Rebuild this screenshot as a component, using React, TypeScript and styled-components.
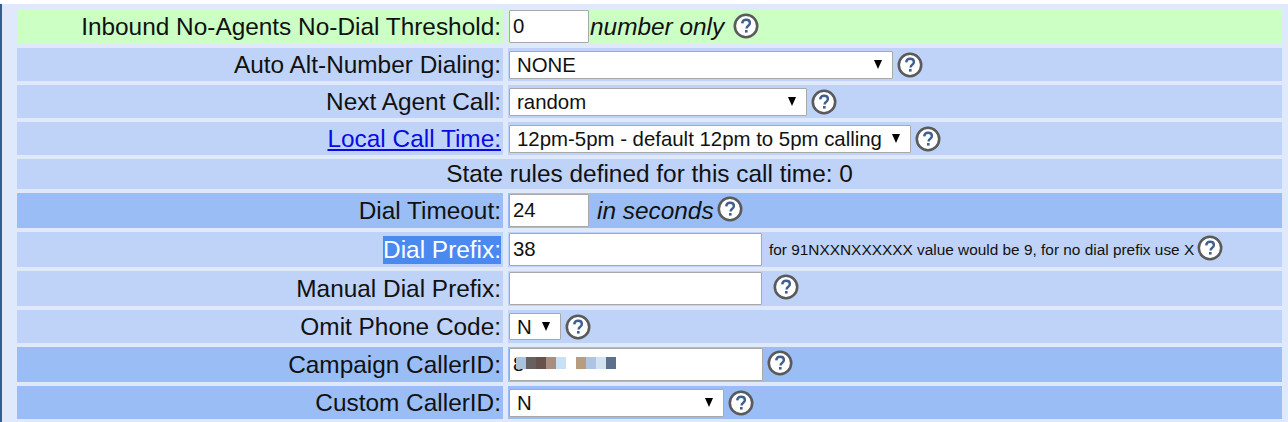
import * as React from 'react';
import styled, { createGlobalStyle } from 'styled-components';

const GlobalStyle = createGlobalStyle`
  html, body {
    margin: 0;
    padding: 0;
    background: #ffffff;
    font-family: "Liberation Sans", Arial, sans-serif;
    color: #111111;
  }
`;

type Tone = 'green' | 'light' | 'dark';

const toneColors: Record<Tone, string> = {
  green: '#ccffc4',
  light: '#bfd3f8',
  dark: '#9abdf5',
};

const Page = styled.div`
  width: 1288px;
  height: 422px;
  box-sizing: border-box;
  padding-top: 4px;
  overflow: hidden;
`;

const Panel = styled.div`
  height: 418px;
  box-sizing: border-box;
  border-left: 2px solid #2d5f95;
  background: #dfe9fb;
  padding: 5px 6px 0 15px;
  display: flex;
  flex-direction: column;
  gap: 4px;
`;

const Row = styled.div<{ $height: number }>`
  height: ${({ $height }) => $height}px;
  display: grid;
  grid-template-columns: 486px 1fr;
  column-gap: 5px;
`;

const LabelCell = styled.div<{ $tone: Tone }>`
  background: ${({ $tone }) => toneColors[$tone]};
  display: flex;
  align-items: center;
  justify-content: flex-end;
  padding-right: 2px;
  font-size: 24.4px;
`;

const FieldCell = styled.div<{ $tone: Tone }>`
  background: ${({ $tone }) => toneColors[$tone]};
  display: flex;
  align-items: center;
  padding-left: 1px;
`;

const WideCell = styled.div<{ $tone: Tone }>`
  grid-column: 1 / -1;
  background: ${({ $tone }) => toneColors[$tone]};
  display: flex;
  align-items: center;
  justify-content: center;
  font-size: 24.4px;
`;

const CallTimeLink = styled.a`
  color: #0a0ae6;
  text-decoration: underline;
`;

const SelectedLabel = styled.span`
  background: #4a8af0;
  color: #ffffff;
  line-height: 28px;
`;

const TextInput = styled.input<{ $width: number; $height: number }>`
  width: ${({ $width }) => $width}px;
  height: ${({ $height }) => $height}px;
  box-sizing: border-box;
  border: 1px solid #a9a9a9;
  border-radius: 1px;
  background: #ffffff;
  padding: 0 3px;
  margin: 0;
  font-family: inherit;
  font-size: 20.4px;
  color: #111111;
  outline: none;
`;

const SelectWrap = styled.div<{ $width: number; $height: number }>`
  position: relative;
  width: ${({ $width }) => $width}px;
  height: ${({ $height }) => $height}px;

  &::after {
    content: '';
    position: absolute;
    right: 11px;
    top: 50%;
    margin-top: -5px;
    border-left: 4.5px solid transparent;
    border-right: 4.5px solid transparent;
    border-top: 9px solid #000000;
  }
`;

const Select = styled.select`
  appearance: none;
  width: 100%;
  height: 100%;
  box-sizing: border-box;
  border: 1px solid #a9a9a9;
  border-radius: 1px;
  background: #ffffff;
  padding: 0 7px;
  margin: 0;
  font-family: inherit;
  font-size: 20.4px;
  color: #111111;
  outline: none;
`;

const Note = styled.span<{ $left: number }>`
  margin-left: ${({ $left }) => $left}px;
  font-size: 24.4px;
  font-style: italic;
`;

const SmallNote = styled.span`
  margin-left: 7px;
  font-size: 15.4px;
`;

const HelpIcon = styled.svg<{ $left: number; $up: number }>`
  width: 26px;
  height: 26px;
  flex: none;
  margin-left: ${({ $left }) => $left}px;
  margin-bottom: ${({ $up }) => $up}px;
`;

const MaskedField = styled.div`
  position: relative;
  display: flex;
`;

const Mosaic = styled.div`
  position: absolute;
  left: 7px;
  top: 9px;
  display: flex;
  height: 12px;
`;

const MosaicCell = styled.div<{ $color: string }>`
  width: 10px;
  background: ${({ $color }) => $color};
`;

const mosaicColors = [
  '#abc1dc', '#666060', '#65524c', '#a78e80', '#c8dff4', '#ffffff',
  '#b99b7f', '#aec4e2', '#d2e2ef', '#5c6f8c',
];

function Help({ left = 4, up = 0 }: { left?: number; up?: number }) {
  return (
    <HelpIcon $left={left} $up={up} viewBox="0 0 26 26" aria-hidden="true">
      <circle cx="13" cy="13" r="11.2" fill="#ffffff" stroke="#5a5a5a" strokeWidth="2.6" />
      <path
        d="M9.2 10.4c.2-2.4 1.8-3.6 3.9-3.6 2.2 0 3.8 1.2 3.8 3.1 0 1.5-.8 2.3-1.9 3.1-1 .7-1.4 1.2-1.4 2.4"
        fill="none"
        stroke="#3f5f8f"
        strokeWidth="2.4"
      />
      <rect x="12" y="17" width="2.6" height="2.6" fill="#3f5f8f" />
    </HelpIcon>
  );
}

function Dropdown({ width, height, value }: { width: number; height: number; value: string }) {
  return (
    <SelectWrap $width={width} $height={height}>
      <Select defaultValue={value}>
        <option>{value}</option>
      </Select>
    </SelectWrap>
  );
}

export default function App() {
  return (
    <Page>
      <GlobalStyle />
      <Panel>
        <Row $height={35}>
          <LabelCell $tone="green">Inbound No-Agents No-Dial Threshold:</LabelCell>
          <FieldCell $tone="green">
            <TextInput $width={80} $height={33} defaultValue="0" />
            <Note $left={1}>number only</Note>
            <Help left={9} up={2} />
          </FieldCell>
        </Row>
        <Row $height={33}>
          <LabelCell $tone="light">Auto Alt-Number Dialing:</LabelCell>
          <FieldCell $tone="light">
            <Dropdown width={384} height={28} value="NONE" />
            <Help left={4} />
          </FieldCell>
        </Row>
        <Row $height={33}>
          <LabelCell $tone="light">Next Agent Call:</LabelCell>
          <FieldCell $tone="light">
            <Dropdown width={298} height={28} value="random" />
            <Help left={4} />
          </FieldCell>
        </Row>
        <Row $height={33}>
          <LabelCell $tone="light">
            <CallTimeLink href="#">Local Call Time:</CallTimeLink>
          </LabelCell>
          <FieldCell $tone="light">
            <Dropdown width={402} height={28} value="12pm-5pm - default 12pm to 5pm calling" />
            <Help left={4} />
          </FieldCell>
        </Row>
        <Row $height={30}>
          <WideCell $tone="light">State rules defined for this call time: 0</WideCell>
        </Row>
        <Row $height={35}>
          <LabelCell $tone="dark">Dial Timeout:</LabelCell>
          <FieldCell $tone="dark">
            <TextInput $width={80} $height={33} defaultValue="24" />
            <Note $left={8}>in seconds</Note>
            <Help left={3} up={3} />
          </FieldCell>
        </Row>
        <Row $height={35}>
          <LabelCell $tone="light">
            <SelectedLabel>Dial Prefix:</SelectedLabel>
          </LabelCell>
          <FieldCell $tone="light">
            <TextInput $width={253} $height={33} defaultValue="38" />
            <SmallNote>for 91NXXNXXXXXX value would be 9, for no dial prefix use X</SmallNote>
            <Help left={3} up={3} />
          </FieldCell>
        </Row>
        <Row $height={35}>
          <LabelCell $tone="light">Manual Dial Prefix:</LabelCell>
          <FieldCell $tone="light">
            <TextInput $width={253} $height={33} />
            <Help left={11} up={3} />
          </FieldCell>
        </Row>
        <Row $height={33}>
          <LabelCell $tone="light">Omit Phone Code:</LabelCell>
          <FieldCell $tone="light">
            <Dropdown width={52} height={27} value="N" />
            <Help left={4} />
          </FieldCell>
        </Row>
        <Row $height={35}>
          <LabelCell $tone="dark">Campaign CallerID:</LabelCell>
          <FieldCell $tone="dark">
            <MaskedField>
              <TextInput $width={254} $height={33} defaultValue="8" />
              <Mosaic>
                {mosaicColors.map((color, i) => (
                  <MosaicCell key={i} $color={color} />
                ))}
              </Mosaic>
            </MaskedField>
            <Help left={4} up={3} />
          </FieldCell>
        </Row>
        <Row $height={33}>
          <LabelCell $tone="dark">Custom CallerID:</LabelCell>
          <FieldCell $tone="dark">
            <Dropdown width={215} height={28} value="N" />
            <Help left={4} />
          </FieldCell>
        </Row>
      </Panel>
    </Page>
  );
}
